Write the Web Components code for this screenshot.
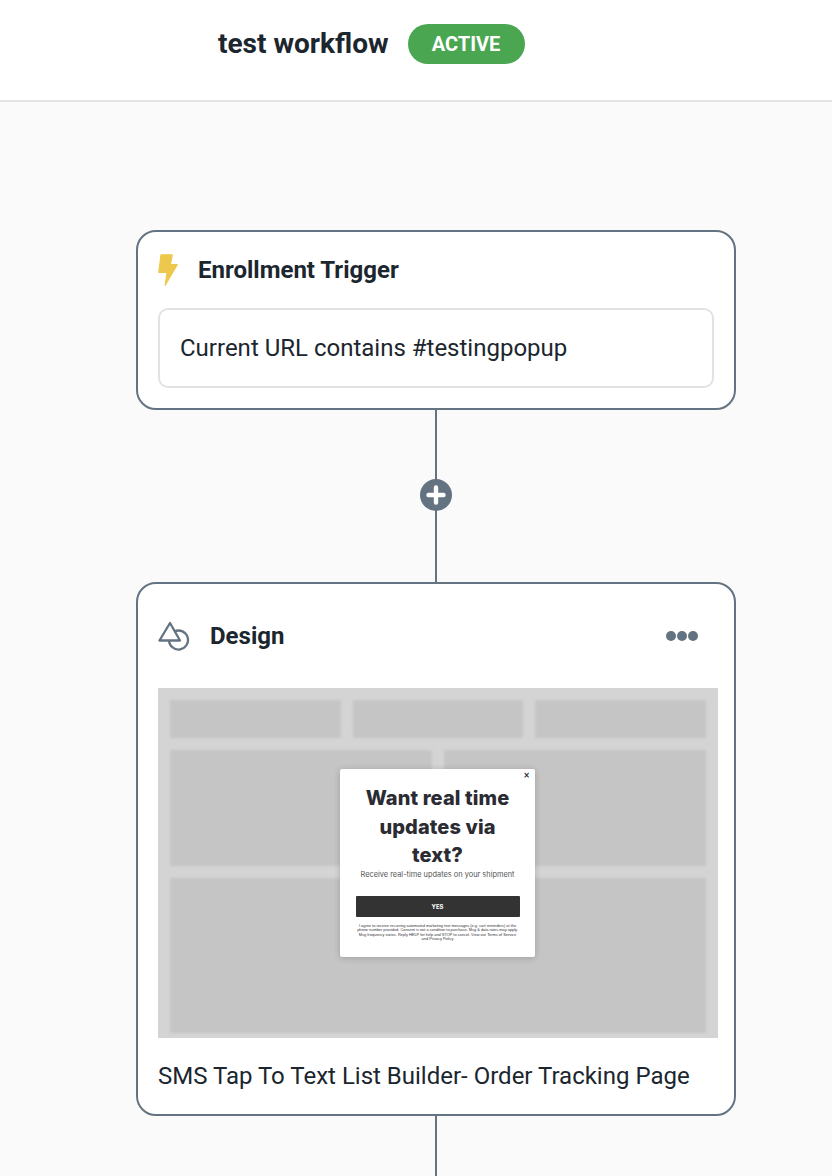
<!DOCTYPE html>
<html lang="en">
<head>
<meta charset="utf-8">
<title>test workflow</title>
<style>
    html, body { margin: 0; padding: 0; }
    body { background: #fafafa; font-family: Roboto, sans-serif; height: 1176px; overflow: hidden; }
    wf-canvas { padding-top: 128px; }
</style>
</head>
<body>
<wf-header name="test workflow" status="ACTIVE"></wf-header>
<wf-canvas>
    <wf-card title="Enrollment Trigger" style="--head-gap: 20px; --head-h: 76px; --pad-bottom: 20px;">
        <wf-bolt slot="icon"></wf-bolt>
        <wf-condition>Current URL contains #testingpopup</wf-condition>
    </wf-card>
    <wf-connector height="172" plus></wf-connector>
    <wf-card title="Design" style="--head-gap: 20px; --head-h: 104px; --pad-bottom: 0px;">
        <wf-shapes slot="icon"></wf-shapes>
        <wf-dots slot="actions"></wf-dots>
        <wf-preview>
            <wf-popup></wf-popup>
        </wf-preview>
        <wf-caption>SMS Tap To Text List Builder- Order Tracking Page</wf-caption>
    </wf-card>
    <wf-connector height="60"></wf-connector>
</wf-canvas>

<script>
class WfHeader extends HTMLElement {
    constructor() {
        super();
        this.attachShadow({ mode: 'open' });
    }
    connectedCallback() {
        this.shadowRoot.innerHTML = `
        <style>
            :host {
                display: flex;
                align-items: center;
                box-sizing: border-box;
                height: 102px;
                padding: 0 0 12px 218px;
                background: #fff;
                border-bottom: 2px solid #e2e2e2;
            }
            h1 { margin: 0; font: 700 28px/32px Roboto, sans-serif; color: #1b262e; }
            span {
                margin-left: 19px;
                display: flex;
                align-items: center;
                justify-content: center;
                width: 117px;
                height: 40px;
                border-radius: 20px;
                background: #4ba651;
                color: #fff;
                font: 700 20px/20px Roboto, sans-serif;
            }
        </style>
        <h1>${this.getAttribute('name')}</h1>
        <span>${this.getAttribute('status')}</span>`;
    }
}

class WfCanvas extends HTMLElement {
    constructor() {
        super();
        this.attachShadow({ mode: 'open' });
        this.shadowRoot.innerHTML = `
        <style>
            :host {
                display: flex;
                flex-direction: column;
                align-items: flex-start;
                padding-left: 136px;
            }
        </style>
        <slot></slot>`;
    }
}

class WfCard extends HTMLElement {
    constructor() {
        super();
        this.attachShadow({ mode: 'open' });
    }
    connectedCallback() {
        this.shadowRoot.innerHTML = `
        <style>
            :host {
                display: block;
                box-sizing: border-box;
                width: 600px;
                padding: 0 20px var(--pad-bottom) 20px;
                background: #fff;
                border: 2px solid #647382;
                border-radius: 20px;
            }
            header {
                display: flex;
                align-items: center;
                height: var(--head-h);
            }
            h2 { margin: 0 0 0 var(--head-gap); font: 700 24px/28px Roboto, sans-serif; color: #1b262e; }
            .actions { margin-left: auto; }
        </style>
        <header>
            <slot name="icon"></slot>
            <h2>${this.getAttribute('title')}</h2>
            <div class="actions"><slot name="actions"></slot></div>
        </header>
        <slot></slot>`;
    }
}

class WfBolt extends HTMLElement {
    constructor() {
        super();
        this.attachShadow({ mode: 'open' });
        this.shadowRoot.innerHTML = `
        <style>:host { display: block; width: 20px; height: 32px; }</style>
        <svg width="20" height="32" viewBox="0 0 20 32">
            <path d="M3 .8H14.2L12.4 10.6H19.2L7.2 31.2L9 18.4H.8Z" fill="#eec84d" stroke="#eec84d" stroke-width="1.2" stroke-linejoin="round"/>
        </svg>`;
    }
}

class WfShapes extends HTMLElement {
    constructor() {
        super();
        this.attachShadow({ mode: 'open' });
        this.shadowRoot.innerHTML = `
        <style>:host { display: block; width: 32px; height: 30px; }</style>
        <svg width="32" height="30" viewBox="0 0 32 30" fill="none" stroke="#647382" stroke-width="2.3">
            <path d="M12 2L1.5 19.5H22Z" stroke-linejoin="round"/>
            <path d="M16.7 10.3A9.5 9.5 0 1 1 11 19.5"/>
        </svg>`;
    }
}

class WfDots extends HTMLElement {
    constructor() {
        super();
        this.attachShadow({ mode: 'open' });
        this.shadowRoot.innerHTML = `
        <style>
            :host { display: flex; gap: 1px; margin-right: 16px; }
            i { width: 10px; height: 10px; border-radius: 50%; background: #647382; }
        </style>
        <i></i><i></i><i></i>`;
    }
}

class WfCondition extends HTMLElement {
    constructor() {
        super();
        this.attachShadow({ mode: 'open' });
        this.shadowRoot.innerHTML = `
        <style>
            :host {
                display: block;
                box-sizing: border-box;
                width: 556px;
                height: 80px;
                padding: 0 20px;
                background: #fff;
                border: 2px solid #e2e2e2;
                border-radius: 10px;
                font: 400 24px/76px Roboto, sans-serif;
                color: #1b262e;
            }
        </style>
        <slot></slot>`;
    }
}

class WfConnector extends HTMLElement {
    constructor() {
        super();
        this.attachShadow({ mode: 'open' });
    }
    connectedCallback() {
        const plus = this.hasAttribute('plus');
        this.shadowRoot.innerHTML = `
        <style>
            :host {
                display: block;
                position: relative;
                width: 2px;
                height: ${this.getAttribute('height')}px;
                margin-left: 299px;
                background: #647382;
            }
            svg { position: absolute; left: -15px; top: 69px; }
        </style>
        ${plus ? `<svg width="32" height="32" viewBox="0 0 32 32">
            <circle cx="16" cy="16" r="16" fill="#647382"/>
            <path d="M16 8.5V23.5M8.5 16H23.5" stroke="#fff" stroke-width="4.4" stroke-linecap="round"/>
        </svg>` : ''}`;
    }
}

class WfPreview extends HTMLElement {
    constructor() {
        super();
        this.attachShadow({ mode: 'open' });
        this.shadowRoot.innerHTML = `
        <style>
            :host {
                display: block;
                position: relative;
                width: 560px;
                height: 350px;
                overflow: hidden;
                background: #d4d4d4;
            }
            .ghost {
                display: grid;
                grid-template-columns: repeat(6, 1fr);
                grid-template-rows: 38px 116px 155px;
                gap: 12px;
                box-sizing: border-box;
                height: 100%;
                padding: 12px;
                filter: blur(1px);
            }
            .ghost div { background: #c5c5c5; border-radius: 2px; }
            .third { grid-column: span 2; }
            .half { grid-column: span 3; }
            .full { grid-column: span 6; }
        </style>
        <div class="ghost">
            <div class="third"></div><div class="third"></div><div class="third"></div>
            <div class="half"></div><div class="half"></div>
            <div class="full"></div>
        </div>
        <slot></slot>`;
    }
}

class WfPopup extends HTMLElement {
    constructor() {
        super();
        this.attachShadow({ mode: 'open' });
        this.shadowRoot.innerHTML = `
        <style>
            :host {
                position: absolute;
                left: 182px;
                top: 81px;
                box-sizing: border-box;
                width: 195px;
                height: 188px;
                padding: 15px 16px 0;
                display: flex;
                flex-direction: column;
                align-items: center;
                background: #fff;
                border-radius: 2px;
                box-shadow: 0 1px 6px rgba(0, 0, 0, .2);
                text-align: center;
                font-family: Inter, sans-serif;
            }
            .close { position: absolute; top: 2px; right: 5px; font: 700 8px/10px "DejaVu Sans", sans-serif; color: #2b2b33; }
            h3 { margin: 0; width: 150px; font: 800 20px/28.5px Inter, sans-serif; letter-spacing: .1px; color: #2b2b33; }
            p { margin: 0; font: 400 7.4px/10px Inter, sans-serif; color: #555; white-space: nowrap; }
            .yes {
                margin-top: 16px;
                width: 164px;
                height: 21px;
                flex: none;
                background: #333;
                border-radius: 1px;
                color: #fff;
                font: 700 6px/21px Inter, sans-serif;
            }
            small { margin-top: 7px; width: 164px; font: 400 3.9px/4.5px "Liberation Sans", sans-serif; color: #333; }
        </style>
        <span class="close">×</span>
        <h3>Want real time updates via text?</h3>
        <p>Receive real-time updates on your shipment</p>
        <div class="yes">YES</div>
        <small>I agree to receive recurring automated marketing text messages (e.g. cart reminders) at the phone number provided. Consent is not a condition to purchase. Msg &amp; data rates may apply. Msg frequency varies. Reply HELP for help and STOP to cancel. View our Terms of Service and Privacy Policy</small>`;
    }
}

class WfCaption extends HTMLElement {
    constructor() {
        super();
        this.attachShadow({ mode: 'open' });
        this.shadowRoot.innerHTML = `
        <style>
            :host {
                display: block;
                height: 76px;
                font: 400 24px/76px Roboto, sans-serif;
                color: #1b262e;
                white-space: nowrap;
            }
        </style>
        <slot></slot>`;
    }
}

customElements.define('wf-header', WfHeader);
customElements.define('wf-canvas', WfCanvas);
customElements.define('wf-card', WfCard);
customElements.define('wf-bolt', WfBolt);
customElements.define('wf-shapes', WfShapes);
customElements.define('wf-dots', WfDots);
customElements.define('wf-condition', WfCondition);
customElements.define('wf-connector', WfConnector);
customElements.define('wf-preview', WfPreview);
customElements.define('wf-popup', WfPopup);
customElements.define('wf-caption', WfCaption);
</script>
</body>
</html>
